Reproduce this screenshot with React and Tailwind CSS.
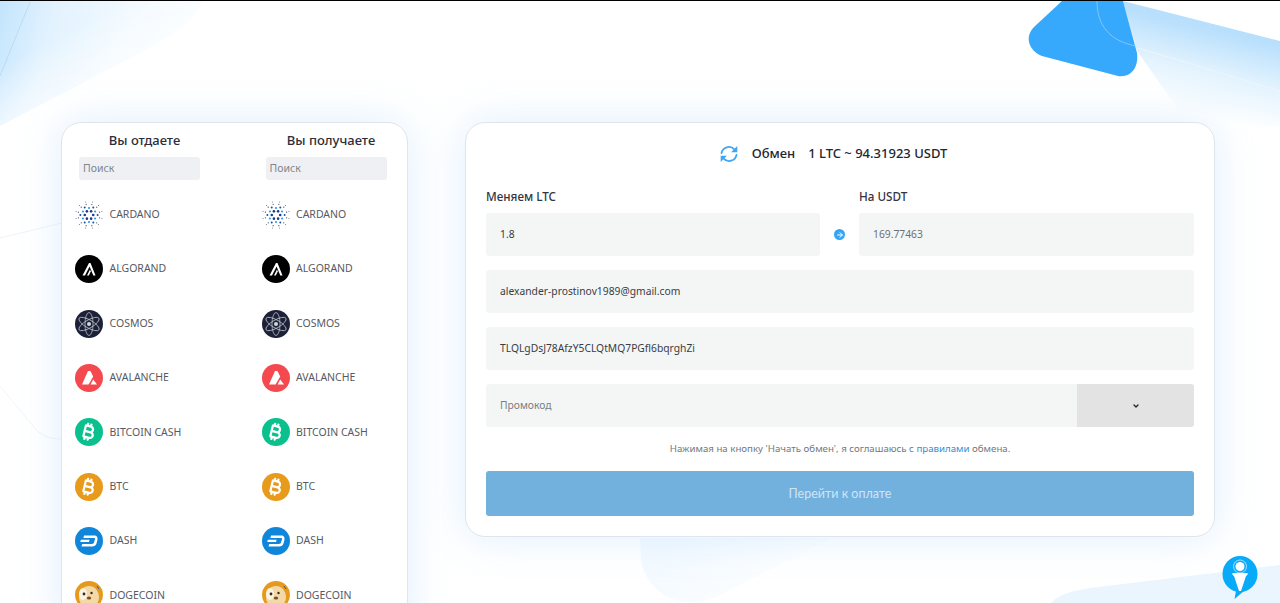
import React from "react";
import { ChevronDown, ArrowRight } from "lucide-react";
import { FaBitcoinSign } from "react-icons/fa6";

const font = { fontFamily: '"Noto Sans", "Open Sans", sans-serif' };

function Cardano() {
  const dots = [];
  [[4.2, 6, 1.3, "#1b3a8c"], [7, 6, 1.1, "#2f9be8"], [8.6, 6, 1, "#1f4fa8"], [11, 12, 0.6, "#3b4a68"], [13.4, 12, 0.5, "#5b6b86"]].forEach(([r, n, s, c], i) => {
    for (let k = 0; k < n; k++) {
      const a = (k / n) * Math.PI * 2 + (i === 1 ? Math.PI / 6 : i >= 3 ? Math.PI / 12 : 0);
      dots.push(<circle key={`${i}-${k}`} cx={14 + r * Math.cos(a)} cy={14 + r * Math.sin(a)} r={s} fill={c} />);
    }
  });
  return <svg viewBox="0 0 28 28" className="w-7 h-7 shrink-0">{dots}</svg>;
}
function Algorand() {
  return (
    <svg viewBox="0 0 28 28" className="w-7 h-7 shrink-0">
      <circle cx="14" cy="14" r="14" fill="#000" />
      <path d="M7.5 20.5 L14 8 L15.5 8 L20.5 20.5 L18.3 20.5 L14.6 11.5 L10 20.5 Z" fill="#fff" />
      <path d="M12 20.5 L15 14.6 L15.8 16.6 L13.8 20.5 Z" fill="#fff" />
    </svg>
  );
}
function Cosmos() {
  return (
    <svg viewBox="0 0 28 28" className="w-7 h-7 shrink-0">
      <circle cx="14" cy="14" r="14" fill="#1c2137" />
      <g fill="none" stroke="#b9bcc8" strokeWidth="0.8">
        <ellipse cx="14" cy="14" rx="4" ry="11.5" />
        <ellipse cx="14" cy="14" rx="4" ry="11.5" transform="rotate(60 14 14)" />
        <ellipse cx="14" cy="14" rx="4" ry="11.5" transform="rotate(120 14 14)" />
      </g>
      <circle cx="14" cy="14" r="2" fill="#d5d7de" />
    </svg>
  );
}
function Avalanche() {
  return (
    <svg viewBox="0 0 28 28" className="w-7 h-7 shrink-0">
      <circle cx="14" cy="14" r="14" fill="#f44a4f" />
      <path d="M13 7 L15.4 7 L18.2 12.5 L13.6 20.5 L7 20.5 Z" fill="#fff" />
      <path d="M18.2 15.5 L22 20.5 L15.6 20.5 Z" fill="#fff" />
    </svg>
  );
}
function Coin({ bg }) {
  return (
    <div className="w-7 h-7 shrink-0 rounded-full flex items-center justify-center text-white" style={{ backgroundColor: bg }}>
      <FaBitcoinSign className="w-[14px] h-[18px] rotate-[14deg]" />
    </div>
  );
}
function Dash() {
  return (
    <svg viewBox="0 0 28 28" className="w-7 h-7 shrink-0">
      <circle cx="14" cy="14" r="14" fill="#0f86da" />
      <path d="M9 8.5 H19 C22 8.5 23 10.5 22.4 13 L21.5 16.5 C20.9 18.6 19.4 19.5 17 19.5 H6.5 L7.2 17 H17 C18 17 18.7 16.6 19 15.6 L19.9 12.4 C20.2 11.4 19.7 11 18.8 11 H8.4 Z" fill="#fff" />
      <path d="M5.9 12.8 H14.6 L14 15 H5.2 Z" fill="#fff" />
    </svg>
  );
}
function Doge() {
  return (
    <svg viewBox="0 0 28 28" className="w-7 h-7 shrink-0">
      <circle cx="14" cy="14" r="14" fill="#e59a1c" />
      <ellipse cx="14" cy="16" rx="10" ry="11" fill="#f3d9a8" />
      <ellipse cx="8" cy="13" rx="4" ry="6" fill="#fbf3e2" />
      <circle cx="9" cy="13" r="1.4" fill="#3a2a1a" />
      <circle cx="16.5" cy="12" r="1.2" fill="#3a2a1a" />
      <ellipse cx="14" cy="17" rx="2.2" ry="1.6" fill="#7a4f1e" />
      <path d="M22 5 L24 8" stroke="#3a5a8a" strokeWidth="1" />
    </svg>
  );
}

function Exchange() {
  return (
    <svg viewBox="0 0 24 24" className="w-[20px] h-[20px] mr-[13px] shrink-0">
      <g fill="none" stroke="#3ea6f5" strokeWidth="2.2" strokeLinecap="round">
        <path d="M3 11 A9 9 0 0 1 18.4 6.4" />
        <path d="M21 13 A9 9 0 0 1 5.6 17.6" />
      </g>
      <path d="M22 2.5 L22 10 L14.5 10 Z" fill="#3ea6f5" />
      <path d="M2 21.5 L2 14 L9.5 14 Z" fill="#3ea6f5" />
    </svg>
  );
}

const coins = [
  ["CARDANO", <Cardano />],
  ["ALGORAND", <Algorand />],
  ["COSMOS", <Cosmos />],
  ["AVALANCHE", <Avalanche />],
  ["BITCOIN CASH", <Coin bg="#0ac18e" />],
  ["BTC", <Coin bg="#e89a1a" />],
  ["DASH", <Dash />],
  ["DOGECOIN", <Doge />],
];

function Column({ title }) {
  return (
    <div className="w-[186.5px] shrink-0">
      <div className="pl-[17px] w-[148px] text-center text-[13px] leading-[18px] font-medium text-[#2b2d38] whitespace-nowrap">{title}</div>
      <div className="ml-[17px] mt-[8px] w-[121px] h-[23px] pt-[1px] rounded-[3px] bg-[#eef0f3] flex items-center px-1 text-[10.5px] text-[#80848c]">Поиск</div>
      <div className="mt-[21px] flex flex-col gap-[26.35px] pl-[13px]">
        {coins.map(([name, icon]) => (
          <div key={name} className="flex items-center gap-[6.5px] h-7">
            {icon}
            <span className="text-[10.5px] text-[#585a62] whitespace-nowrap">{name}</span>
          </div>
        ))}
      </div>
    </div>
  );
}

function Field({ children, className = "" }) {
  return (
    <div className={`h-[43px] pt-[1px] rounded-[3px] bg-[#f4f6f6] flex items-center px-[14px] text-[10.3px] ${className}`}>{children}</div>
  );
}

function Background() {
  return (
    <svg viewBox="0 0 1280 603" className="absolute inset-0 w-[1280px] h-[603px]">
      <defs>
        <linearGradient id="tl" gradientUnits="userSpaceOnUse" x1="0" y1="10" x2="200" y2="60">
          <stop offset="0" stopColor="#c4e5fd" />
          <stop offset="0.25" stopColor="#e2f2fe" />
          <stop offset="0.6" stopColor="#f1f9ff" />
          <stop offset="1" stopColor="#f9fcff" />
        </linearGradient>
        <linearGradient id="tlmask" gradientUnits="userSpaceOnUse" x1="30" y1="50" x2="70" y2="130">
          <stop offset="0" stopColor="#fff" />
          <stop offset="1" stopColor="#000" />
        </linearGradient>
        <mask id="tlm">
          <rect width="300" height="200" fill="url(#tlmask)" />
        </mask>
        <linearGradient id="tr" gradientUnits="userSpaceOnUse" x1="1200" y1="25" x2="1180" y2="110">
          <stop offset="0" stopColor="#b8dffc" />
          <stop offset="0.5" stopColor="#e3f3fe" />
          <stop offset="1" stopColor="#ffffff" />
        </linearGradient>
        <linearGradient id="bc" gradientUnits="userSpaceOnUse" x1="680" y1="537" x2="760" y2="600">
          <stop offset="0" stopColor="#f4faff" />
          <stop offset="1" stopColor="#fcfeff" />
        </linearGradient>
      </defs>
      <path d="M0 0 H203 C190 25 175 32 150 47 L0 125 Z" fill="url(#tl)" mask="url(#tlm)" />
      <path d="M30 1 L0 75" stroke="#b9dcf6" strokeWidth="1" fill="none" />
      <path d="M1123 0 L1280 40 V125 H1190 L1137 50 Z" fill="url(#tr)" />
      <path d="M1138 47 L1280 90" stroke="#f0f4f8" strokeWidth="1" fill="none" />
      <path d="M1062 0 H1123 L1137 52 C1139 66 1131 77 1118 75 L1042 55 C1029 50 1024 36 1034 26 Z" fill="#36a9fd" />
      <path d="M1097 0 C1097 25 1110 40 1136 45" stroke="#9bd3fb" strokeWidth="0.7" fill="none" />
      <path d="M0 237 L62 222" stroke="#edf3f9" strokeWidth="1" fill="none" />
      <path d="M0 385 L34 426 C40 434 48 438 62 438" stroke="#f0f5fa" strokeWidth="1" fill="none" />
      <path d="M640 537 H830 L720 594 C690 610 650 600 641 560 Z" fill="url(#bc)" />
      <path d="M1050 603 C1060 592 1075 590 1090 587 L1280 564 V603 Z" fill="#ebf5fd" />
    </svg>
  );
}

function Support() {
  return (
    <svg viewBox="0 0 36 44" className="absolute left-[1222px] top-[555px] w-9 h-11">
      <ellipse cx="18" cy="18" rx="17.5" ry="18" fill="#08aafa" />
      <path d="M14 35 L12.5 43 L22 35 Z" fill="#08aafa" />
      <circle cx="18" cy="10.5" r="4.5" fill="#fff" />
      <circle cx="18" cy="10.5" r="6.5" fill="none" stroke="#cdeefe" strokeWidth="0.8" />
      <path d="M10.5 17 H25.5 C26 18.5 25 19.5 24 20 L19 35 H17 L12 20 C11 19.5 10 18.5 10.5 17 Z" fill="#fff" />
    </svg>
  );
}

export default function App() {
  return (
    <div className="relative w-[1280px] h-[603px] overflow-hidden bg-white border-t border-black" style={font}>
      <Background />
      <div className="relative flex items-start gap-[57px] pt-[121px] pl-[61px]">
        <div className="w-[347px] h-[520px] shrink-0 overflow-hidden bg-white rounded-[20px] border border-[#dfe5ec] shadow-[0_0_40px_rgba(185,220,252,0.45)] pt-[8px] flex">
          <Column title="Вы отдаете" />
          <Column title="Вы получаете" />
        </div>
        <div className="w-[750px] h-[415px] shrink-0 bg-white rounded-[20px] border border-[#dfe5ec] shadow-[0_0_40px_rgba(185,220,252,0.45)] px-[20px] pt-[19px]">
          <div className="flex items-center justify-center pr-[14px] h-[24px] text-[13px] font-medium text-[#23252f]">
            <Exchange />
            <span className="mr-[13px]">Обмен</span>
            <span>1 LTC ~ 94.31923 USDT</span>
          </div>
          <div className="mt-[21px] flex text-[11.7px] leading-[18px] font-medium text-[#33353f]">
            <div className="w-[373px]">Меняем LTC</div>
            <div>На USDT</div>
          </div>
          <div className="mt-[8px] flex items-center">
            <Field className="w-[334px] text-[#3a3c44]">1.8</Field>
            <div className="w-[39px] flex justify-center">
              <div className="w-[11px] h-[11px] rounded-full bg-[#35a5f5] flex items-center justify-center">
                <ArrowRight className="w-[8px] h-[8px] text-white" strokeWidth={3} />
              </div>
            </div>
            <Field className="flex-1 text-[#6d7076]">169.77463</Field>
          </div>
          <Field className="mt-[14px] text-[#3a3c44]">alexander-prostinov1989@gmail.com</Field>
          <Field className="mt-[14px] text-[#3a3c44]">TLQLgDsJ78AfzY5CLQtMQ7PGfl6bqrghZi</Field>
          <div className="mt-[14px] h-[43px] flex rounded-[3px] overflow-hidden bg-[#f4f6f6]">
            <div className="flex-1 flex items-center pt-[1px] px-[14px] text-[10.3px] text-[#7a7d83]">Промокод</div>
            <div className="w-[117px] bg-[#e3e3e3] flex items-center justify-center">
              <ChevronDown className="w-[8px] h-[8px] text-[#23252f]" strokeWidth={4} />
            </div>
          </div>
          <div className="mt-[15px] h-[15px] flex items-center justify-center text-[9.7px] text-[#74777d]">
            <span>Нажимая на кнопку 'Начать обмен', я соглашаюсь с <span className="text-[#2f8fd6]">правилами</span> обмена.</span>
          </div>
          <div className="mt-[14px] h-[45px] pt-[1px] rounded-[3px] bg-[#72b0de] flex items-center justify-center text-[12.5px] text-[#cfe5f6]" style={{ fontFamily: '"Lato", sans-serif' }}>
            Перейти к оплате
          </div>
        </div>
      </div>
      <Support />
    </div>
  );
}
